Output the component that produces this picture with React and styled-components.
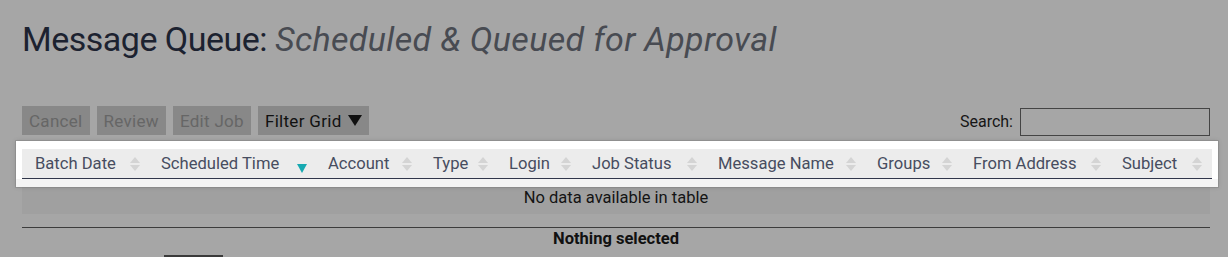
import styled, { createGlobalStyle } from 'styled-components'

const GlobalStyle = createGlobalStyle`
  body {
    margin: 0;
    background: #a6a6a6;
    font-family: Roboto, "Liberation Sans", sans-serif;
  }
`

const columns = [
  { name: 'Batch Date', width: 126 },
  { name: 'Scheduled Time', width: 167, sorted: true },
  { name: 'Account', width: 105 },
  { name: 'Type', width: 76 },
  { name: 'Login', width: 83 },
  { name: 'Job Status', width: 126 },
  { name: 'Message Name', width: 159 },
  { name: 'Groups', width: 96 },
  { name: 'From Address', width: 149 },
  { name: 'Subject', width: 101 },
]

const Page = styled.div`
  padding: 0 18px 0 22px;
  height: 257px;
  overflow: hidden;
`

const Title = styled.h1`
  margin: 0;
  padding-top: 19px;
  font-size: 34px;
  font-weight: 400;
  line-height: 40px;
  letter-spacing: -0.5px;
  color: #1c2230;
  white-space: nowrap;
`

const Sub = styled.em`
  color: #484b52;
  font-weight: 400;
  letter-spacing: 0.35px;
`

const Toolbar = styled.div`
  display: flex;
  align-items: center;
  justify-content: space-between;
  margin-top: 47px;
  height: 29px;
`

const Buttons = styled.div`
  display: flex;
  gap: 7px;
`

const Button = styled.button`
  height: 29px;
  padding: 0 7px;
  border: none;
  background: #888888;
  color: ${p => (p.$active ? '#111' : '#666')};
  font-family: inherit;
  font-size: 17px;
  letter-spacing: 0.3px;
  display: flex;
  align-items: center;
  gap: 6px;
`

const Caret = styled.span`
  width: 0;
  height: 0;
  border-left: 7px solid transparent;
  border-right: 7px solid transparent;
  border-top: 11px solid #111;
`

const Search = styled.label`
  display: flex;
  align-items: center;
  gap: 7px;
  font-size: 16px;
  color: #161616;
  padding-top: 2px;
`

const SearchInput = styled.input`
  width: 190px;
  height: 28px;
  box-sizing: border-box;
  border: 1px solid #444;
  background: transparent;
  margin: 0;
`

const Highlight = styled.div`
  margin: 6px -8px 0 -6px;
  padding: 8px 6px 0;
  background: #fff;
  box-shadow: 0 0 0 1px rgba(120, 120, 120, 0.35), 0 0 4px rgba(60, 60, 60, 0.25);
  position: relative;
`

const HeadRow = styled.div`
  display: flex;
  height: 29px;
  background: #ececec;
  border-bottom: 1px solid #30364a;
`

const HeadCell = styled.div`
  flex: 0 0 ${p => p.$w}px;
  box-sizing: border-box;
  display: flex;
  align-items: center;
  justify-content: space-between;
  padding: 0 8px 0 13px;
  font-size: 16.6px;
  color: #474d60;
  white-space: nowrap;
`

const Sorter = styled.span`
  display: flex;
  flex-direction: column;
  gap: 2px;
  width: 11px;
  align-items: center;
`

const Tri = styled.span`
  width: 0;
  height: 0;
  border-left: 5px solid transparent;
  border-right: 5px solid transparent;
  ${p => (p.$up ? 'border-bottom' : 'border-top')}: 6px solid #d4d4d4;
`

const Active = styled.span`
  width: 0;
  height: 0;
  margin-top: 9px;
  border-left: 5.5px solid transparent;
  border-right: 5.5px solid transparent;
  border-top: 9px solid #17a9b1;
`

const Fade = styled.div`
  height: 8px;
  margin: 0 -6px;
  background: #f4f4f4;
`

const EmptyRow = styled.div`
  height: 27px;
  box-sizing: border-box;
  padding-top: 1px;
  background: #a0a0a0;
  text-align: center;
  line-height: 19px;
  font-size: 16.5px;
  color: #141414;
`

const Footer = styled.div`
  margin-top: 13px;
  border-top: 1px solid #3c3c3c;
  text-align: center;
  font-size: 16.5px;
  font-weight: 700;
  color: #111;
  line-height: 22px;
`

const Pager = styled.div`
  margin: 5px 0 0 142px;
  width: 59px;
  height: 10px;
  border-top: 2px solid #3a3a3a;
`

function SortIcon({ sorted }) {
  return (
    <Sorter>
      {sorted ? (
        <Active />
      ) : (
        <>
          <Tri $up />
          <Tri />
        </>
      )}
    </Sorter>
  )
}

export default function App() {
  return (
    <>
      <GlobalStyle />
      <Page>
        <Title>
          Message Queue: <Sub>Scheduled &amp; Queued for Approval</Sub>
        </Title>
        <Toolbar>
          <Buttons>
            <Button>Cancel</Button>
            <Button>Review</Button>
            <Button>Edit Job</Button>
            <Button $active>
              Filter Grid <Caret />
            </Button>
          </Buttons>
          <Search>
            Search: <SearchInput type="text" />
          </Search>
        </Toolbar>
        <Highlight>
          <HeadRow>
            {columns.map(c => (
              <HeadCell key={c.name} $w={c.width}>
                {c.name}
                <SortIcon sorted={c.sorted} />
              </HeadCell>
            ))}
          </HeadRow>
          <Fade />
        </Highlight>
        <EmptyRow>No data available in table</EmptyRow>
        <Footer>Nothing selected</Footer>
        <Pager />
      </Page>
    </>
  )
}
